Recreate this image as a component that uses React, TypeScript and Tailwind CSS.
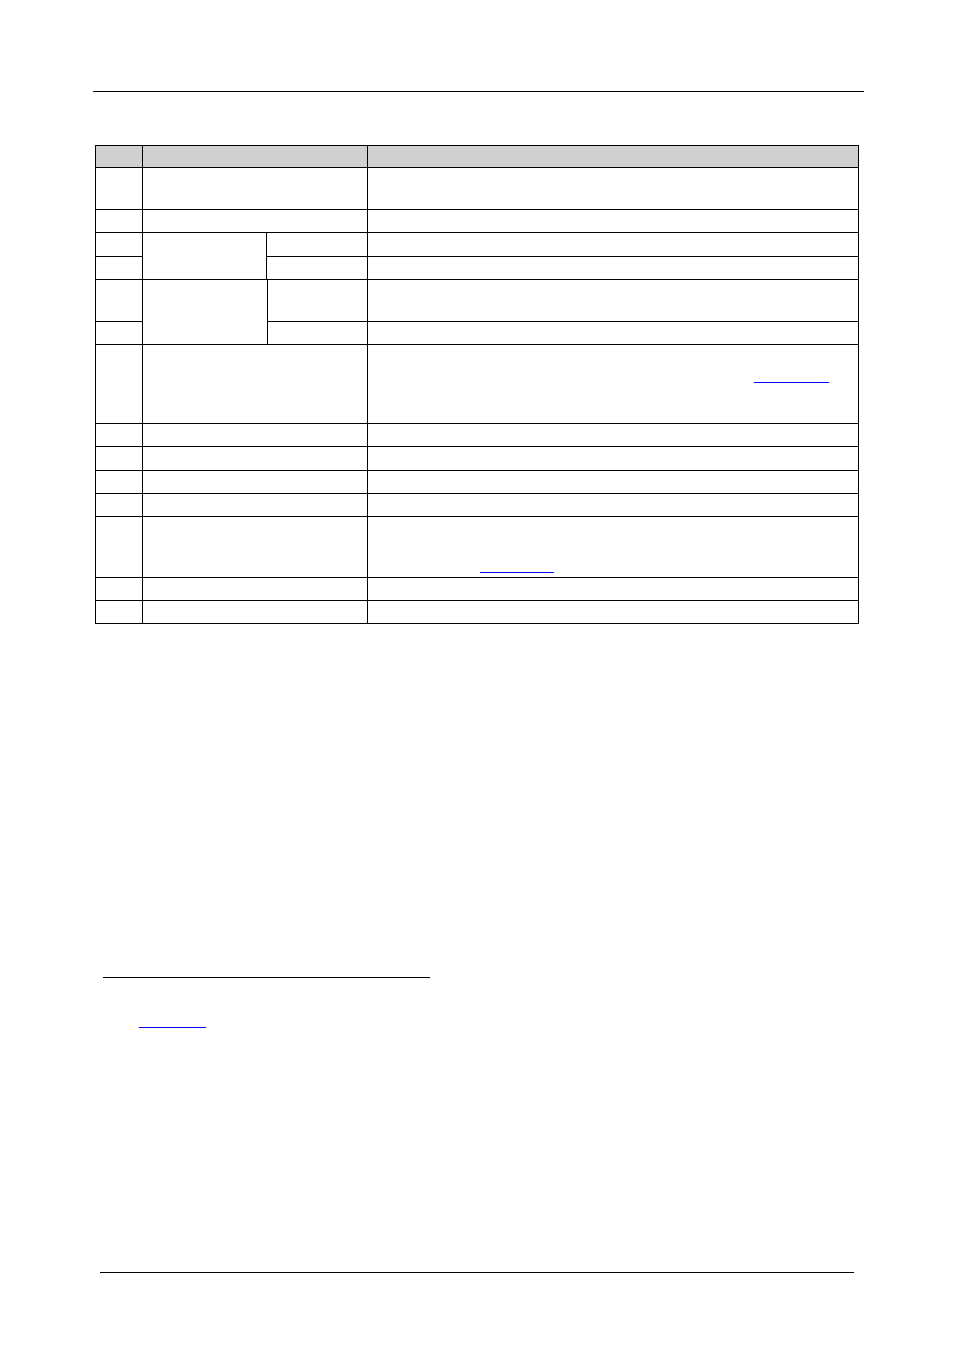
const cell = "border-r border-b border-black";

export default function App() {
  return (
    <div className="w-[954px] h-[1354px] bg-white pt-[91px]">
      {/* page header rule */}
      <div className="ml-[93px] w-[771px] h-px bg-black" />

      {/* table */}
      <div className="mt-[53px] ml-[95px] w-[764px] grid grid-cols-[47px_124px_1px_100px_491px] grid-rows-[22px_42px_23px_24px_23px_42px_23px_79px_23px_24px_23px_23px_61px_23px_23px] border-l border-t border-black">
        {/* header */}
        <div className={`${cell} bg-[#d0d0d0]`} />
        <div className={`${cell} col-span-3 bg-[#d0d0d0]`} />
        <div className={`${cell} bg-[#d0d0d0]`} />

        {/* row 1 */}
        <div className={cell} />
        <div className={`${cell} col-span-3`} />
        <div className={cell} />

        {/* row 2 */}
        <div className={cell} />
        <div className={`${cell} col-span-3`} />
        <div className={cell} />

        {/* rows 3-4 */}
        <div className={cell} />
        <div className={`${cell} row-span-2`} />
        <div className={`${cell} col-span-2`} />
        <div className={cell} />
        <div className={cell} />
        <div className={`${cell} col-span-2`} />
        <div className={cell} />

        {/* rows 5-6 */}
        <div className={cell} />
        <div className={`${cell} row-span-2 col-span-2`} />
        <div className={cell} />
        <div className={cell} />
        <div className={cell} />
        <div className={cell} />
        <div className={cell} />

        {/* row 7 */}
        <div className={cell} />
        <div className={`${cell} col-span-3`} />
        <div className={`${cell} pt-[37px] pl-[386px]`}>
          <div className="w-[75px] h-px bg-[#0000ff]" />
        </div>

        {/* rows 8-11 */}
        {[0, 1, 2, 3].map((i) => (
          <div key={i} className="contents">
            <div className={cell} />
            <div className={`${cell} col-span-3`} />
            <div className={cell} />
          </div>
        ))}

        {/* row 12 */}
        <div className={cell} />
        <div className={`${cell} col-span-3`} />
        <div className={`${cell} pt-[55px] pl-[112px]`}>
          <div className="w-[74px] h-px bg-[#0000ff]" />
        </div>

        {/* rows 13-14 */}
        {[0, 1].map((i) => (
          <div key={i} className="contents">
            <div className={cell} />
            <div className={`${cell} col-span-3`} />
            <div className={cell} />
          </div>
        ))}
      </div>

      {/* footnote separator */}
      <div className="mt-[353px] ml-[103px] w-[327px] h-px bg-black" />
      <div className="mt-[49px] ml-[139px] w-[67px] h-px bg-[#0000ff]" />

      {/* page footer rule */}
      <div className="mt-[244px] ml-[100px] w-[754px] h-px bg-black" />
    </div>
  );
}
